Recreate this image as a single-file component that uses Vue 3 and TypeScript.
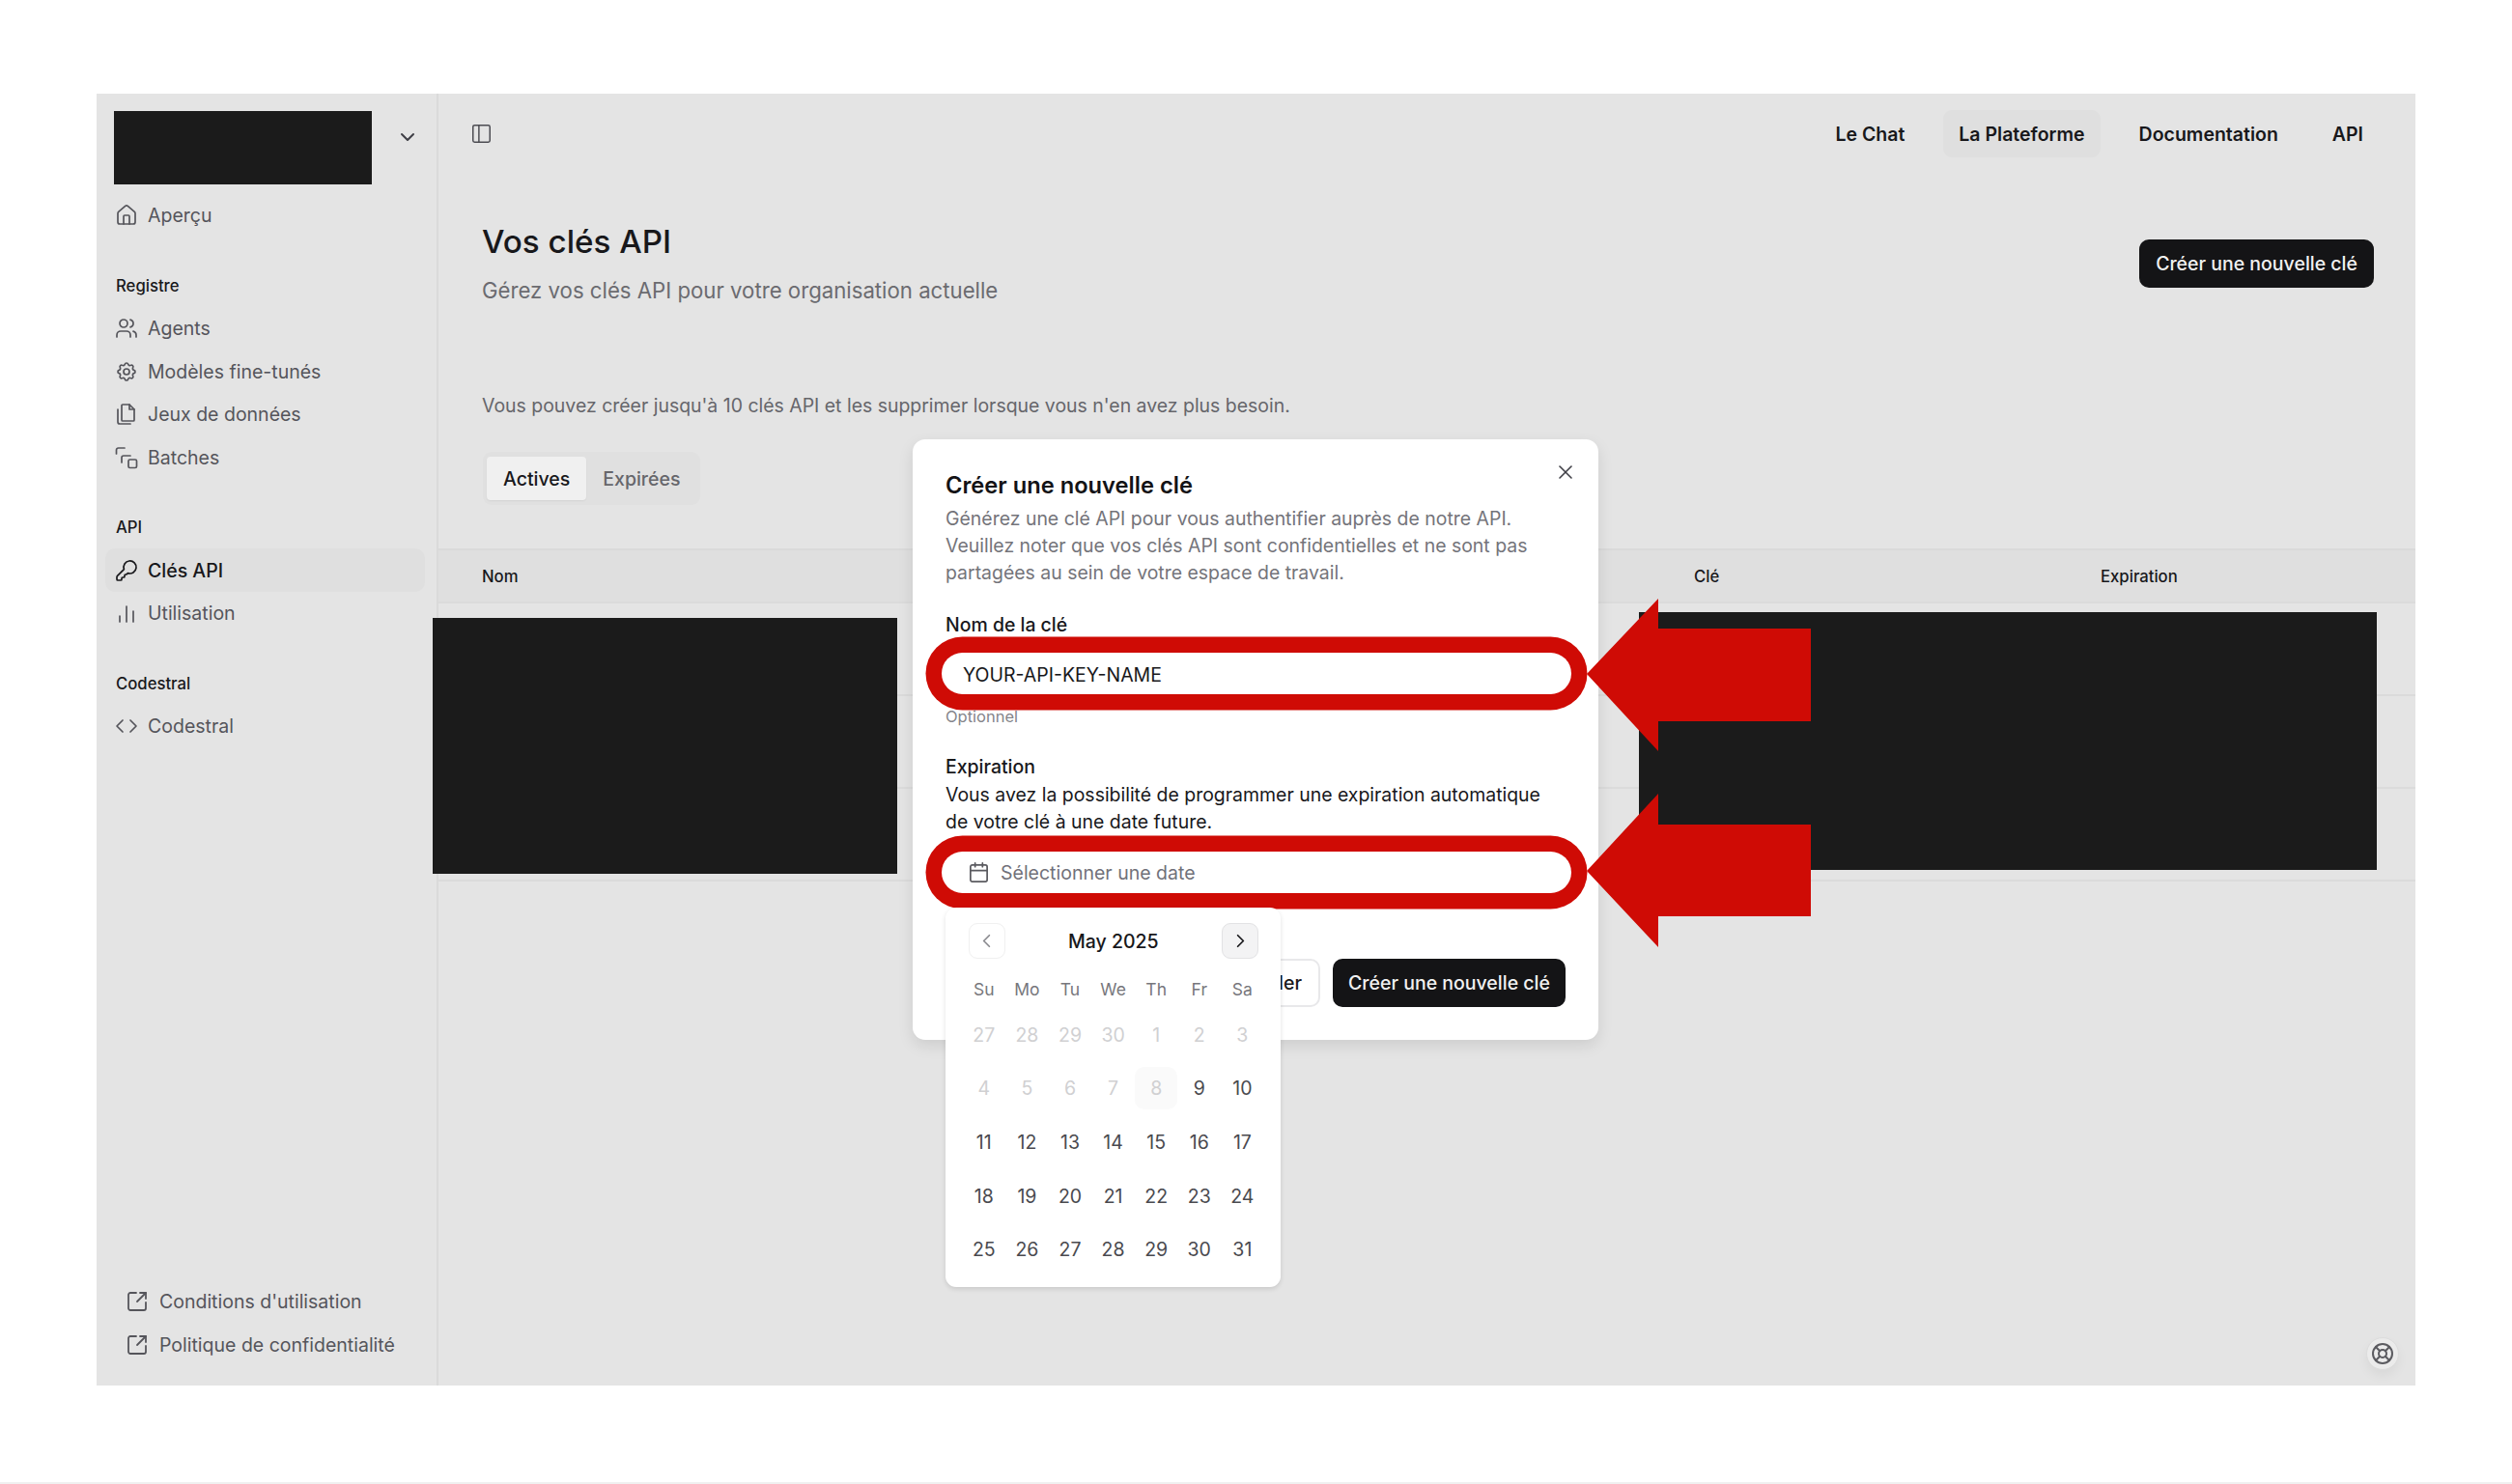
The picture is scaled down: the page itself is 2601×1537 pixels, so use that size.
<script setup lang="ts">
const weekdays: string[] = ['Su', 'Mo', 'Tu', 'We', 'Th', 'Fr', 'Sa']
interface Day { label: number; off: boolean; today?: boolean }
const prevDays: Day[] = [27, 28, 29, 30].map((label) => ({ label, off: true }))
const days: Day[] = Array.from({ length: 31 }, (_, i) => ({
  label: i + 1,
  off: i + 1 <= 8,
  today: i + 1 === 8,
}))
const cells: Day[] = [...prevDays, ...days]
const navLinks: { label: string; active?: boolean }[] = [
  { label: 'Le Chat' },
  { label: 'La Plateforme', active: true },
  { label: 'Documentation' },
  { label: 'API' },
]
</script>

<template>
  <div class="page">
    <div class="frame">
      <aside class="sidebar">
        <div class="brand">
          <div class="brand-mask"></div>
          <svg class="chev" viewBox="0 0 24 24"><path d="m6 9 6 6 6-6" /></svg>
        </div>

        <a class="item">
          <svg viewBox="0 0 24 24"><path d="M15 21v-8a1 1 0 0 0-1-1h-4a1 1 0 0 0-1 1v8" /><path d="M3 10a2 2 0 0 1 .709-1.528l7-5.999a2 2 0 0 1 2.582 0l7 5.999A2 2 0 0 1 21 10v9a2 2 0 0 1-2 2H5a2 2 0 0 1-2-2z" /></svg>
          <span>Aperçu</span>
        </a>

        <h4 class="section">Registre</h4>
        <a class="item">
          <svg viewBox="0 0 24 24"><path d="M16 21v-2a4 4 0 0 0-4-4H6a4 4 0 0 0-4 4v2" /><circle cx="9" cy="7" r="4" /><path d="M22 21v-2a4 4 0 0 0-3-3.87" /><path d="M16 3.13a4 4 0 0 1 0 7.75" /></svg>
          <span>Agents</span>
        </a>
        <a class="item">
          <svg viewBox="0 0 24 24"><path d="M10.325 4.317c.426-1.756 2.924-1.756 3.35 0a1.724 1.724 0 0 0 2.573 1.066c1.543-.94 3.31.826 2.37 2.37a1.724 1.724 0 0 0 1.065 2.572c1.756.426 1.756 2.924 0 3.35a1.724 1.724 0 0 0-1.066 2.573c.94 1.543-.826 3.31-2.37 2.37a1.724 1.724 0 0 0-2.572 1.065c-.426 1.756-2.924 1.756-3.35 0a1.724 1.724 0 0 0-2.573-1.066c-1.543.94-3.31-.826-2.37-2.37a1.724 1.724 0 0 0-1.065-2.572c-1.756-.426-1.756-2.924 0-3.35a1.724 1.724 0 0 0 1.066-2.573c-.94-1.543.826-3.31 2.37-2.37 1 .608 2.296.07 2.572-1.065z" /><circle cx="12" cy="12" r="3" /></svg>
          <span>Modèles fine-tunés</span>
        </a>
        <a class="item">
          <svg viewBox="0 0 24 24"><path d="M8 2h7l5 5v11a1 1 0 0 1-1 1H8a1 1 0 0 1-1-1V3a1 1 0 0 1 1-1z" /><path d="M15 2v5h5" /><path d="M3 7v13a2 2 0 0 0 2 2h11" /></svg>
          <span>Jeux de données</span>
        </a>
        <a class="item">
          <svg viewBox="0 0 24 24"><path d="M1.500 8V4a2 2 0 0 1 2-2H10" /><path d="M7 17v-5a2 2 0 0 1 2-2h7" /><rect x="14" y="14" width="8.500" height="8.500" rx="1.500" /></svg>
          <span>Batches</span>
        </a>

        <h4 class="section">API</h4>
        <a class="item active">
          <svg viewBox="0 0 24 24"><path d="M2.586 17.414A2 2 0 0 0 2 18.828V21a1 1 0 0 0 1 1h3a1 1 0 0 0 1-1v-1a1 1 0 0 1 1-1h1a1 1 0 0 0 1-1v-1a1 1 0 0 1 1-1h.172a2 2 0 0 0 1.414-.586l.814-.814a6.500 6.500 0 1 0-4-4z" /></svg>
          <span>Clés API</span>
        </a>
        <a class="item">
          <svg viewBox="0 0 24 24"><path d="M5 21v-6" /><path d="M12 21V5" /><path d="M19 21V10" /></svg>
          <span>Utilisation</span>
        </a>

        <h4 class="section">Codestral</h4>
        <a class="item">
          <svg viewBox="0 0 24 24"><path d="m16 18 6-6-6-6" /><path d="m8 6-6 6 6 6" /></svg>
          <span>Codestral</span>
        </a>

        <div class="legal">
          <a class="legal-item">
            <svg viewBox="0 0 24 24"><path d="M21 13v6a2 2 0 0 1-2 2H5a2 2 0 0 1-2-2V5a2 2 0 0 1 2-2h6" /><path d="m21 3-9 9" /><path d="M15 3h6v6" /></svg>
            <span>Conditions d'utilisation</span>
          </a>
          <a class="legal-item">
            <svg viewBox="0 0 24 24"><path d="M21 13v6a2 2 0 0 1-2 2H5a2 2 0 0 1-2-2V5a2 2 0 0 1 2-2h6" /><path d="m21 3-9 9" /><path d="M15 3h6v6" /></svg>
            <span>Politique de confidentialité</span>
          </a>
        </div>
      </aside>

      <main class="main">
        <header class="topbar">
          <svg class="panel-icon" viewBox="0 0 24 24"><rect x="2" y="2" width="20" height="20" rx="2" /><path d="M9 2v20" /></svg>
          <nav class="links">
            <a v-for="l in navLinks" :key="l.label" class="link" :class="{ on: l.active }">{{ l.label }}</a>
          </nav>
        </header>

        <section class="head">
          <div>
            <h1>Vos clés API</h1>
            <p class="sub">Gérez vos clés API pour votre organisation actuelle</p>
          </div>
          <button class="primary">Créer une nouvelle clé</button>
        </section>

        <p class="note">Vous pouvez créer jusqu'à 10 clés API et les supprimer lorsque vous n'en avez plus besoin.</p>

        <div class="tabs">
          <span class="tab on">Actives</span>
          <span class="tab">Expirées</span>
        </div>

        <div class="table">
          <div class="row thead">
            <span>Nom</span>
            <span>Clé</span>
            <span>Expiration</span>
          </div>
          <div class="row"></div>
          <div class="row"></div>
          <div class="row"></div>
        </div>

        <button class="help" aria-label="Aide">
          <svg viewBox="0 0 24 24"><circle cx="12" cy="12" r="10" /><circle cx="12" cy="12" r="4" /><path d="m4.930 4.930 4.240 4.240" /><path d="m14.830 9.170 4.240-4.240" /><path d="m14.830 14.830 4.240 4.240" /><path d="m9.170 14.830-4.240 4.240" /></svg>
        </button>
      </main>

      <div class="mask mask-left"></div>
      <div class="mask mask-right"></div>

      <div class="modal">
        <button class="close" aria-label="Fermer">
          <svg viewBox="0 0 24 24"><path d="M18 6 6 18" /><path d="m6 6 12 12" /></svg>
        </button>
        <h2>Créer une nouvelle clé</h2>
        <p class="desc">Générez une clé API pour vous authentifier auprès de notre API. Veuillez noter que vos clés API sont confidentielles et ne sont pas partagées au sein de votre espace de travail.</p>

        <label class="label first">Nom de la clé</label>
        <div class="field">
          <span class="value">YOUR-API-KEY-NAME</span>
        </div>
        <p class="hint">Optionnel</p>

        <label class="label second">Expiration</label>
        <p class="explain">Vous avez la possibilité de programmer une expiration automatique de votre clé à une date future.</p>
        <div class="field date">
          <svg viewBox="0 0 24 24"><path d="M8 2v4" /><path d="M16 2v4" /><rect x="3" y="4" width="18" height="18" rx="2" /><path d="M3 10h18" /></svg>
          <span>Sélectionner une date</span>
        </div>

        <div class="actions">
          <button class="ghost">Annuler</button>
          <button class="primary small">Créer une nouvelle clé</button>
        </div>

        <div class="calendar">
          <div class="cal-head">
            <button class="cal-btn prev" aria-label="Précédent"><svg viewBox="0 0 24 24"><path d="m15 18-6-6 6-6" /></svg></button>
            <span class="month">May 2025</span>
            <button class="cal-btn next" aria-label="Suivant"><svg viewBox="0 0 24 24"><path d="m9 18 6-6-6-6" /></svg></button>
          </div>
          <div class="cal-week">
            <span v-for="w in weekdays" :key="w">{{ w }}</span>
          </div>
          <div class="cal-grid">
            <span
              v-for="(c, i) in cells"
              :key="i"
              class="day"
              :class="{ off: c.off, today: c.today }"
            >{{ c.label }}</span>
          </div>
        </div>
      </div>

      <svg class="arrow arrow-a" viewBox="0 0 232 161"><polygon points="0,78 74,0 74,31 232,31 232,127 74,127 74,158" /></svg>
      <svg class="arrow arrow-b" viewBox="0 0 232 161"><polygon points="0,80 74,0 74,32 232,32 232,127 74,127 74,159" /></svg>
    </div>
    <div class="baseline"></div>
  </div>
</template>

<style>
html, body { margin: 0; background: #fff; }
</style>

<style scoped>
* { box-sizing: border-box; }
.page {
  width: 2601px;
  height: 1537px;
  padding: 97px 100px 0;
  position: relative;
  overflow: hidden;
  font-family: Inter, "Liberation Sans", sans-serif;
  color: #18181b;
  background: #fff;
}
.baseline {
  position: absolute;
  left: 0;
  right: 0;
  bottom: 0;
  height: 2px;
  background: #f0f0f0;
}
.frame {
  position: relative;
  display: flex;
  width: 2401px;
  height: 1338px;
  background: #e4e4e4;
}
svg { fill: none; stroke: currentColor; stroke-width: 2; stroke-linecap: round; stroke-linejoin: round; }

/* sidebar */
.sidebar {
  width: 354px;
  flex: none;
  display: flex;
  flex-direction: column;
  border-right: 2px solid #dadada;
  padding: 18px 12px 20px 9px;
}
.brand {
  display: flex;
  align-items: flex-start;
  height: 76px;
  margin-left: 9px;
  margin-bottom: 10px;
  position: relative;
}
.brand-mask { width: 267px; height: 76px; background: #1b1b1b; }
.chev {
  position: absolute;
  left: 292px;
  top: 15px;
  width: 24px;
  height: 24px;
  color: #3f3f46;
}
.item {
  height: 44.700px;
  display: flex;
  align-items: center;
  gap: 10px;
  padding-left: 10px;
  font-size: 19.500px;
  color: #55555b;
  border-radius: 10px;
}
.item svg { width: 24px; height: 24px; flex: none; stroke-width: 1.700; }
.item.active { background: #dfdfdf; color: #18181b; font-weight: 500; }
.section {
  margin: 38px 0 10px 11px;
  height: 24px;
  line-height: 24px;
  font-size: 16.700px;
  font-weight: 500;
  color: #18181b;
}
.legal { margin-top: auto; padding-left: 21px; }
.legal-item {
  height: 45px;
  display: flex;
  align-items: center;
  gap: 11px;
  font-size: 19.500px;
  color: #55555b;
}
.legal-item svg { width: 24px; height: 24px; flex: none; stroke-width: 1.800; }

/* main */
.main { flex: 1; min-width: 0; position: relative; display: flex; flex-direction: column; }
.topbar {
  display: flex;
  align-items: center;
  justify-content: space-between;
  padding: 17px 38px 0 34px;
}
.panel-icon { width: 21px; height: 21px; color: #4c4c52; stroke-width: 1.700; }
.links { display: flex; gap: 24px; }
.link {
  height: 49px;
  line-height: 51px;
  padding: 0 16px;
  border-radius: 9px;
  font-size: 19.500px;
  font-weight: 600;
  color: #18181b;
}
.link.on { background: #dfdfdf; }
.head {
  margin-top: 67px;
  padding: 0 43px 0 45px;
  display: flex;
  justify-content: space-between;
  align-items: center;
}
h1 {
  margin: 0;
  height: 40px;
  line-height: 41px;
  font-size: 33.200px;
  font-weight: 500;
  color: #18181b;
}
.sub {
  margin: 16px 0 0;
  height: 30px;
  line-height: 30px;
  font-size: 22.200px;
  color: #6b6b70;
}
.primary {
  height: 50px;
  padding: 0 17px;
  border: 0;
  border-radius: 10px;
  background: #141416;
  color: #f1f1f1;
  font: 500 19.500px Inter, "Liberation Sans", sans-serif;
}
.primary.small { width: 241px; padding: 0; }
.note {
  margin: 91px 0 0 45px;
  height: 26px;
  line-height: 26px;
  font-size: 19.450px;
  color: #66666b;
}
.tabs {
  margin: 35px 0 0 46px;
  width: 225px;
  height: 55px;
  padding: 5px 4px;
  display: flex;
  background: #e0e0e0;
  border-radius: 9px;
}
.tab {
  height: 45px;
  line-height: 46px;
  font-size: 19.500px;
  font-weight: 500;
  padding: 0 17px;
  color: #66666b;
  border-radius: 4px;
}
.tab.on { background: #f0f0f0; color: #18181b; box-shadow: 0 1px 2px rgba(0, 0, 0, .06); }
.table { margin-top: 45px; }
.row {
  display: grid;
  grid-template-columns: 1255px 421px 1fr;
  height: 96px;
  border-bottom: 2px solid #dbdbdb;
  padding-left: 45px;
}
.thead {
  height: 57px;
  background: #dfdfdf;
  border-top: 2px solid #dadada;
  align-items: center;
  font-size: 16.700px;
  font-weight: 500;
  color: #18181b;
}
.help {
  position: absolute;
  right: 17px;
  bottom: 16px;
  width: 34px;
  height: 34px;
  padding: 0;
  border: 1px solid #dcdcdc;
  border-radius: 50%;
  background: #ebebeb;
  color: #5b5b60;
  display: flex;
  align-items: center;
  justify-content: center;
  box-shadow: 0 6px 12px rgba(0, 0, 0, .05);
}
.help svg { width: 24px; height: 24px; flex: none; stroke-width: 2; }

/* redactions */
.mask { position: absolute; background: #1b1b1b; }
.mask-left { left: 348px; top: 543px; width: 481px; height: 265px; }
.mask-right { left: 1597px; top: 537px; width: 764px; height: 267px; }

/* modal */
.modal {
  position: absolute;
  left: 845px;
  top: 358px;
  width: 710px;
  height: 622px;
  padding: 31px 34px 34px;
  background: #fff;
  border-radius: 13px;
  box-shadow: 0 6px 16px rgba(0, 0, 0, .1);
}
h2 {
  margin: 0;
  height: 32px;
  line-height: 34px;
  font-size: 23.700px;
  font-weight: 600;
  color: #131316;
}
.close {
  position: absolute;
  right: 22px;
  top: 22px;
  width: 24px;
  height: 24px;
  padding: 0;
  border: 0;
  background: none;
  color: #3f3f46;
  display: flex;
}
.close svg { width: 24px; height: 24px; stroke-width: 1.600; }
.desc {
  margin: 5px 0 0;
  font-size: 19.450px;
  line-height: 28px;
  color: #74747a;
}
.label {
  display: block;
  height: 26px;
  line-height: 28px;
  font-size: 19.450px;
  font-weight: 500;
  color: #18181b;
}
.label.first { margin-top: 26px; }
.label.second { margin-top: 28px; }
.field {
  margin: 17px -6px 0 -4px;
  height: 43px;
  border-radius: 22px;
  background: #fff;
  box-shadow: 0 0 0 16.500px #cf0b05;
  display: flex;
  align-items: center;
  font-size: 19.500px;
}
.value { padding-left: 22px; padding-top: 2px; color: #18181b; }
.field.date { color: #71717a; margin-top: 17px; padding-left: 27px; gap: 11px; }
.field.date svg { width: 23px; height: 23px; color: #5b5b60; stroke-width: 1.800; }
.hint {
  margin: 13px 0 0;
  height: 20px;
  line-height: 21px;
  font-size: 16.500px;
  color: #85858a;
}
.explain {
  margin: 3px 0 0;
  font-size: 19.450px;
  line-height: 28px;
  color: #18181b;
}
.actions {
  margin-top: 68px;
  display: flex;
  justify-content: flex-end;
  gap: 13px;
}
.ghost {
  height: 50px;
  padding: 0 17px;
  border: 2px solid #e8e8ea;
  border-radius: 10px;
  background: #fff;
  color: #18181b;
  font: 500 19.500px Inter, "Liberation Sans", sans-serif;
}

/* calendar */
.calendar {
  position: absolute;
  left: 34px;
  top: 485px;
  width: 347px;
  height: 393px;
  padding: 16px 17px 18px 17.500px;
  background: #fff;
  border-radius: 11px;
  box-shadow: 0 2px 5px rgba(0, 0, 0, .12);
}
.cal-head {
  display: flex;
  align-items: center;
  justify-content: space-between;
  padding: 0 6px;
  height: 37px;
}
.cal-btn {
  width: 38px;
  height: 37px;
  padding: 0;
  border: 1px solid #f0f0f0;
  border-radius: 9px;
  background: #fff;
  color: #8a8a8f;
  display: flex;
  align-items: center;
  justify-content: center;
}
.cal-btn svg { width: 23px; height: 23px; flex: none; stroke-width: 1.800; }
.cal-btn.next { background: #f3f3f4; border-color: #e2e2e4; color: #18181b; }
.month { font-size: 19.500px; font-weight: 500; color: #18181b; padding-top: 1px; }
.cal-week {
  margin-top: 20px;
  display: grid;
  grid-template-columns: repeat(7, 44.600px);
  height: 24px;
  line-height: 24px;
  text-align: center;
  font-size: 17.500px;
  color: #77777c;
}
.cal-grid {
  margin-top: 12.500px;
  display: grid;
  grid-template-columns: repeat(7, 44.600px);
  grid-auto-rows: 44px;
  row-gap: 11.700px;
}
.day {
  display: flex;
  align-items: center;
  justify-content: center;
  font-size: 19.500px;
  color: #4a4a4f;
  border-radius: 10px;
}
.day.off { color: #d0d0d2; }
.day.today { background: #fafafa; }

/* arrows */
.arrow { position: absolute; width: 232px; height: 161px; fill: #cf0b05; stroke: none; }
.arrow-a { left: 1543px; top: 523px; }
.arrow-b { left: 1543px; top: 725px; }
</style>
